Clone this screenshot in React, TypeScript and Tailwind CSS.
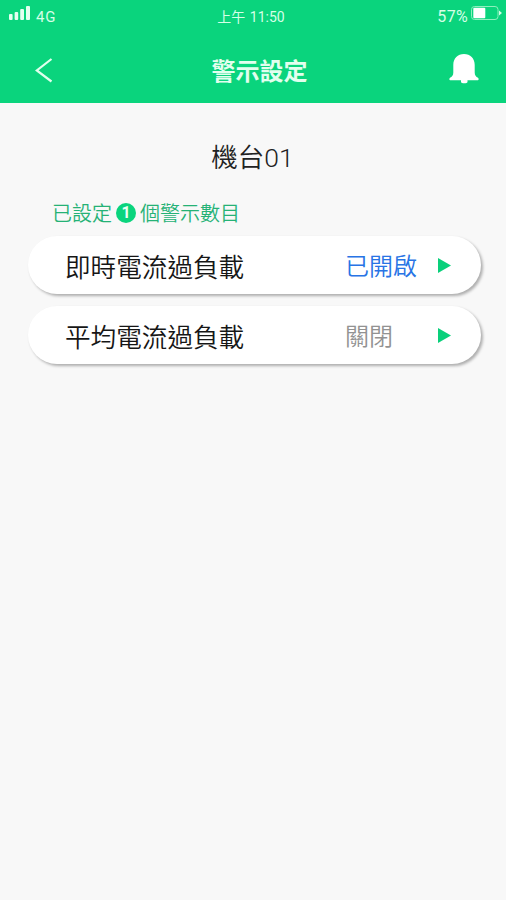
type AlertRow = { name: string; status: string; enabled: boolean };

const rows: AlertRow[] = [
  { name: '即時電流過負載', status: '已開啟', enabled: true },
  { name: '平均電流過負載', status: '關閉', enabled: false },
];

function StatusBar() {
  return (
    <div className="flex h-[34px] items-start font-['Roboto','Noto_Sans_CJK_TC',sans-serif] text-[14px] leading-[18px] font-normal text-[#d5ffe7]">
      <div className="flex w-1/3 pl-[9px]">
        <svg className="mt-[5px] h-[15px] w-[22px]" viewBox="0 0 22 15" fill="#e4fff0">
          <rect x="0" y="9" width="3.6" height="6" rx="1" />
          <rect x="5.6" y="7" width="3.6" height="8" rx="1" />
          <rect x="11.2" y="4" width="3.8" height="11" rx="1" />
          <rect x="17" y="1" width="4" height="14" rx="1" />
        </svg>
        <span className="ml-[5px] mt-[8px] text-[15px] tracking-[0.8px]">4G</span>
      </div>
      <div className="mt-[8px] w-1/3 text-center">
        <span className="-ml-[4px] whitespace-pre">
          上午 <span className="ml-[1px]">11:50</span>
        </span>
      </div>
      <div className="flex w-1/3 justify-end pr-[4px]">
        <span className="mr-[3px] mt-[8px] text-[16px] tracking-[0.3px]">57%</span>
        <svg className="mt-[6px] h-[14px] w-[31px]" viewBox="0 0 31 14">
          <rect x="0.5" y="0.5" width="26.5" height="13" rx="3" fill="none" stroke="#8df0bd" />
          <rect x="2.3" y="1.7" width="12" height="10.6" rx="1" fill="#fff" />
          <path d="M28 4.5L31 7L28 9.5Z" fill="#d5ffe7" />
        </svg>
      </div>
    </div>
  );
}

function Header() {
  return (
    <header className="h-[103px] bg-[#0ad47d]">
      <StatusBar />
      <div className="flex h-[69px] items-center justify-between pl-[35px] pr-[27px]">
        <svg className="mt-[3px] h-[26px] w-[30px]" viewBox="0 0 30 26" fill="none" stroke="#e0ffed" strokeWidth="2.2">
          <path d="M16.5 2L1.8 13.5L16.5 24.5" />
        </svg>
        <h1 className="mt-[2px] pl-[5px] text-[24px] leading-[34px] font-bold text-[#e2ffee]">警示設定</h1>
        <svg className="mt-[1px] h-[31px] w-[30px]" viewBox="0 0 30 31" fill="#fff">
          <path d="M15 0C8.7 0 4.3 4.5 4.3 10.8V18.5C4.3 21.5 3 22.7 1 23.8C0 24.5 0.2 26.2 1.2 26.2H28.8C29.8 26.2 30 24.5 29 23.8C27 22.7 25.7 21.5 25.7 18.5V10.8C25.7 4.5 21.3 0 15 0Z" />
          <path d="M12 26H18.5V28C18.5 29.7 12 29.7 12 28Z" />
        </svg>
      </div>
    </header>
  );
}

function AlertCard({ name, status, enabled }: AlertRow) {
  return (
    <div className="flex h-[58px] items-center rounded-full bg-white pt-[2px] pl-[37px] pr-[30px] shadow-[2px_2px_3px_rgba(0,0,0,0.3)]">
      <span className="w-[280px] text-[25.6px] leading-[38px] text-[#161616]">{name}</span>
      <span
        className={
          enabled
            ? '-mt-[2px] text-[24px] leading-[36px] text-[#2874e5]'
            : '-mt-[2px] text-[24px] leading-[36px] text-[#929292]'
        }
      >
        {status}
      </span>
      <svg className="-mt-[1px] ml-auto h-[15px] w-[13px]" viewBox="0 0 13 15" fill="#0ad07b">
        <path d="M0 0L13 7.5L0 15Z" />
      </svg>
    </div>
  );
}

export default function App() {
  return (
    <div className="h-[900px] w-[506px] overflow-hidden bg-[#f8f8f8] font-['Noto_Sans_CJK_TC',sans-serif] font-[350]">
      <Header />
      <main className="pl-[28px] pr-[25px] pt-[34px]">
        <h2 className="h-[38px] pr-[4px] text-center text-[26.5px] leading-[38px] text-[#222]">
          機台<span className="font-['Roboto',sans-serif] text-[26.5px] leading-none font-light">01</span>
        </h2>
        <div className="mt-[23px] flex items-center pl-[24px] text-[20px] leading-[30px] text-[#25b276]">
          <span>已設定</span>
          <span className="mx-[4px] flex h-[20px] w-[20px] items-center justify-center rounded-full bg-[#0ad47d] font-['Roboto',sans-serif] text-[16px] font-bold leading-[20px] text-[#ebfff4]">
            1
          </span>
          <span>個警示數目</span>
        </div>
        <div className="mt-[8px] flex flex-col gap-[12px]">
          {rows.map((row) => (
            <AlertCard key={row.name} {...row} />
          ))}
        </div>
      </main>
    </div>
  );
}
